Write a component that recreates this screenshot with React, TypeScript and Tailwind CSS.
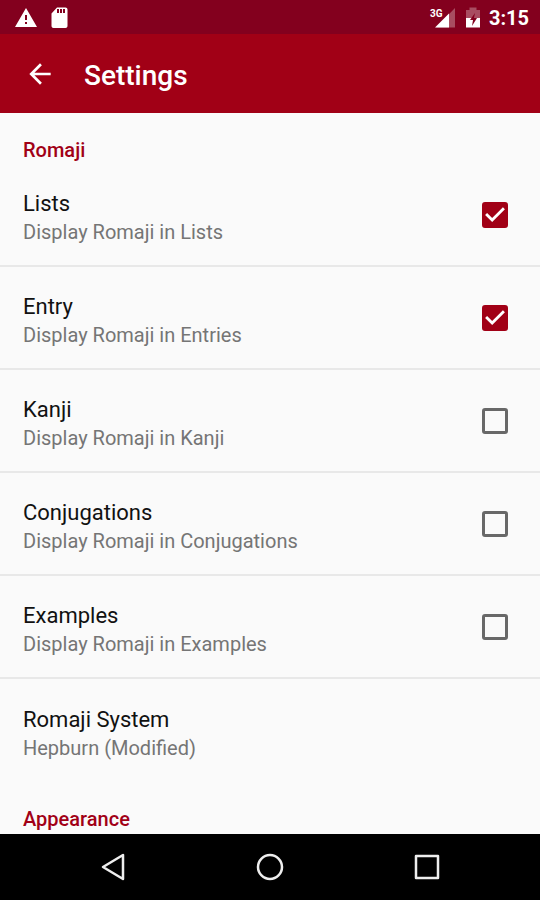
import { useState } from "react";

type SettingKey = "lists" | "entry" | "kanji" | "conjugations" | "examples";

interface ToggleDef {
  key: SettingKey;
  label: string;
  description: string;
}

const ROMAJI_TOGGLES: ToggleDef[] = [
  { key: "lists", label: "Lists", description: "Display Romaji in Lists" },
  { key: "entry", label: "Entry", description: "Display Romaji in Entries" },
  { key: "kanji", label: "Kanji", description: "Display Romaji in Kanji" },
  { key: "conjugations", label: "Conjugations", description: "Display Romaji in Conjugations" },
  { key: "examples", label: "Examples", description: "Display Romaji in Examples" },
];

function StatusBar() {
  return (
    <div className="flex h-[34px] shrink-0 items-center bg-[#83001e] pr-[11px] pl-[14px] text-white">
      <svg className="h-6 w-6" viewBox="0 0 24 24" fill="currentColor" aria-hidden="true">
        <path d="M1 22h22L12 3 1 22zm12-3h-2v-2h2v2zm0-4h-2v-5h2v5z" />
      </svg>
      <svg className="ml-[9px] h-6 w-6" viewBox="0 0 24 24" fill="currentColor" aria-hidden="true">
        <path d="M18.500 2.500H10l-5.500 6V21c0 1.100.900 2 2 2h12c1.100 0 2-.900 2-2V4.500c0-1.100-.900-2-2-2zM12 8h-2V4h2v4zm3 0h-2V4h2v4zm3 0h-2V4h2v4z" />
      </svg>

      <div className="ml-auto flex items-center">
        <svg className="h-6 w-[26px]" viewBox="0 0 26 24" fill="currentColor" aria-hidden="true">
          <path d="M26 3v19.500H7z" opacity="0.3" />
          <path d="M20 8.500v14H6z" />
          <text x="1" y="12" fontFamily="Roboto, sans-serif" fontSize="10" fontWeight="700">
            3G
          </text>
        </svg>
        <svg className="ml-[6px] h-6 w-6" viewBox="0 0 24 24" fill="currentColor" aria-hidden="true">
          <path d="M15.500 5V2.500h-7V5H5v8h14V5z" opacity="0.3" />
          <path d="M5 13v9.500h14V13z" />
          <path d="M14 8l-5 7h3l-1 6 5-8h-3z" fill="#83001e" />
        </svg>
        <span className="ml-1 pt-px text-xl leading-6 font-bold">3:15</span>
      </div>
    </div>
  );
}

function Toolbar() {
  return (
    <header className="flex h-[79px] shrink-0 items-center bg-[#a10016] px-6 text-white">
      <button type="button" aria-label="Back">
        <svg className="h-8 w-8" viewBox="0 0 24 24" fill="currentColor" aria-hidden="true">
          <path d="M20 11H7.830l5.590-5.590L12 4l-8 8 8 8 1.410-1.410L7.830 13H20v-2z" />
        </svg>
      </button>
      <h1 className="ml-7 pt-1 text-[28px] leading-8 font-medium">Settings</h1>
    </header>
  );
}

interface ToggleRowProps {
  setting: ToggleDef;
  checked: boolean;
  onChange: (checked: boolean) => void;
}

function ToggleRow({ setting, checked, onChange }: ToggleRowProps) {
  return (
    <label className="flex min-h-[103px] items-center justify-between border-b-2 border-[#e8e8e8] pr-7 pl-[23px]">
      <span className="pt-[7px]">
        <span className="block text-[22px] leading-7 text-[#111111]">{setting.label}</span>
        <span className="block text-[20px] leading-7 text-[#757575]">{setting.description}</span>
      </span>
      <span className="grid h-[34px] w-[34px] shrink-0 place-items-center">
        <input
          type="checkbox"
          checked={checked}
          onChange={(e) => onChange(e.target.checked)}
          className="col-start-1 row-start-1 h-[26px] w-[26px] appearance-none rounded-[3px] border-[3px] border-[#686868] checked:border-[#a10016] checked:bg-[#a10016]"
        />
        {checked && (
          <svg
            className="pointer-events-none col-start-1 row-start-1 h-[34px] w-[34px]"
            viewBox="0 0 24 24"
            fill="#ffffff"
            aria-hidden="true"
          >
            <path d="M10 17l-5-5 1.410-1.410L10 14.170l7.590-7.590L19 8l-9 9z" />
          </svg>
        )}
      </span>
    </label>
  );
}

function NavigationBar() {
  return (
    <nav className="flex h-[66px] shrink-0 items-center justify-center gap-[125px] bg-black text-[#eeeeee]">
      <button type="button" aria-label="Back">
        <svg className="h-8 w-8" viewBox="0 0 32 32" fill="none" stroke="currentColor" strokeWidth="2.500" strokeLinejoin="round" aria-hidden="true">
          <path d="M26 4v24L6 16z" />
        </svg>
      </button>
      <button type="button" aria-label="Home">
        <svg className="h-8 w-8" viewBox="0 0 32 32" fill="none" stroke="currentColor" strokeWidth="2.500" aria-hidden="true">
          <circle cx="16" cy="16" r="12" />
        </svg>
      </button>
      <button type="button" aria-label="Recent apps">
        <svg className="h-8 w-8" viewBox="0 0 32 32" fill="none" stroke="currentColor" strokeWidth="2.500" strokeLinejoin="round" aria-hidden="true">
          <path d="M5 5h22v22H5z" />
        </svg>
      </button>
    </nav>
  );
}

export default function App() {
  const [settings, setSettings] = useState<Record<SettingKey, boolean>>({
    lists: true,
    entry: true,
    kanji: false,
    conjugations: false,
    examples: false,
  });

  function handleToggle(key: SettingKey, checked: boolean) {
    setSettings((prev) => ({ ...prev, [key]: checked }));
  }

  return (
    <div className="flex h-screen flex-col bg-[#fafafa] font-[Roboto,sans-serif]">
      <StatusBar />
      <Toolbar />

      <main className="min-h-0 flex-1 overflow-y-auto [scrollbar-width:none]">
        <section>
          <h2 className="px-[23px] pt-[23px] text-[20px] leading-7 font-medium text-[#a10016]">Romaji</h2>
          {ROMAJI_TOGGLES.map((setting) => (
            <ToggleRow
              key={setting.key}
              setting={setting}
              checked={settings[setting.key]}
              onChange={(checked) => handleToggle(setting.key, checked)}
            />
          ))}
          <button type="button" className="flex min-h-[103px] w-full items-center px-[23px] text-left">
            <span className="pt-[7px]">
              <span className="block text-[22px] leading-7 text-[#111111]">Romaji System</span>
              <span className="block text-[20px] leading-7 text-[#757575]">Hepburn (Modified)</span>
            </span>
          </button>
        </section>
        <section>
          <h2 className="px-[23px] pt-[23px] text-[20px] leading-7 font-medium text-[#a10016]">Appearance</h2>
        </section>
      </main>

      <NavigationBar />
    </div>
  );
}
